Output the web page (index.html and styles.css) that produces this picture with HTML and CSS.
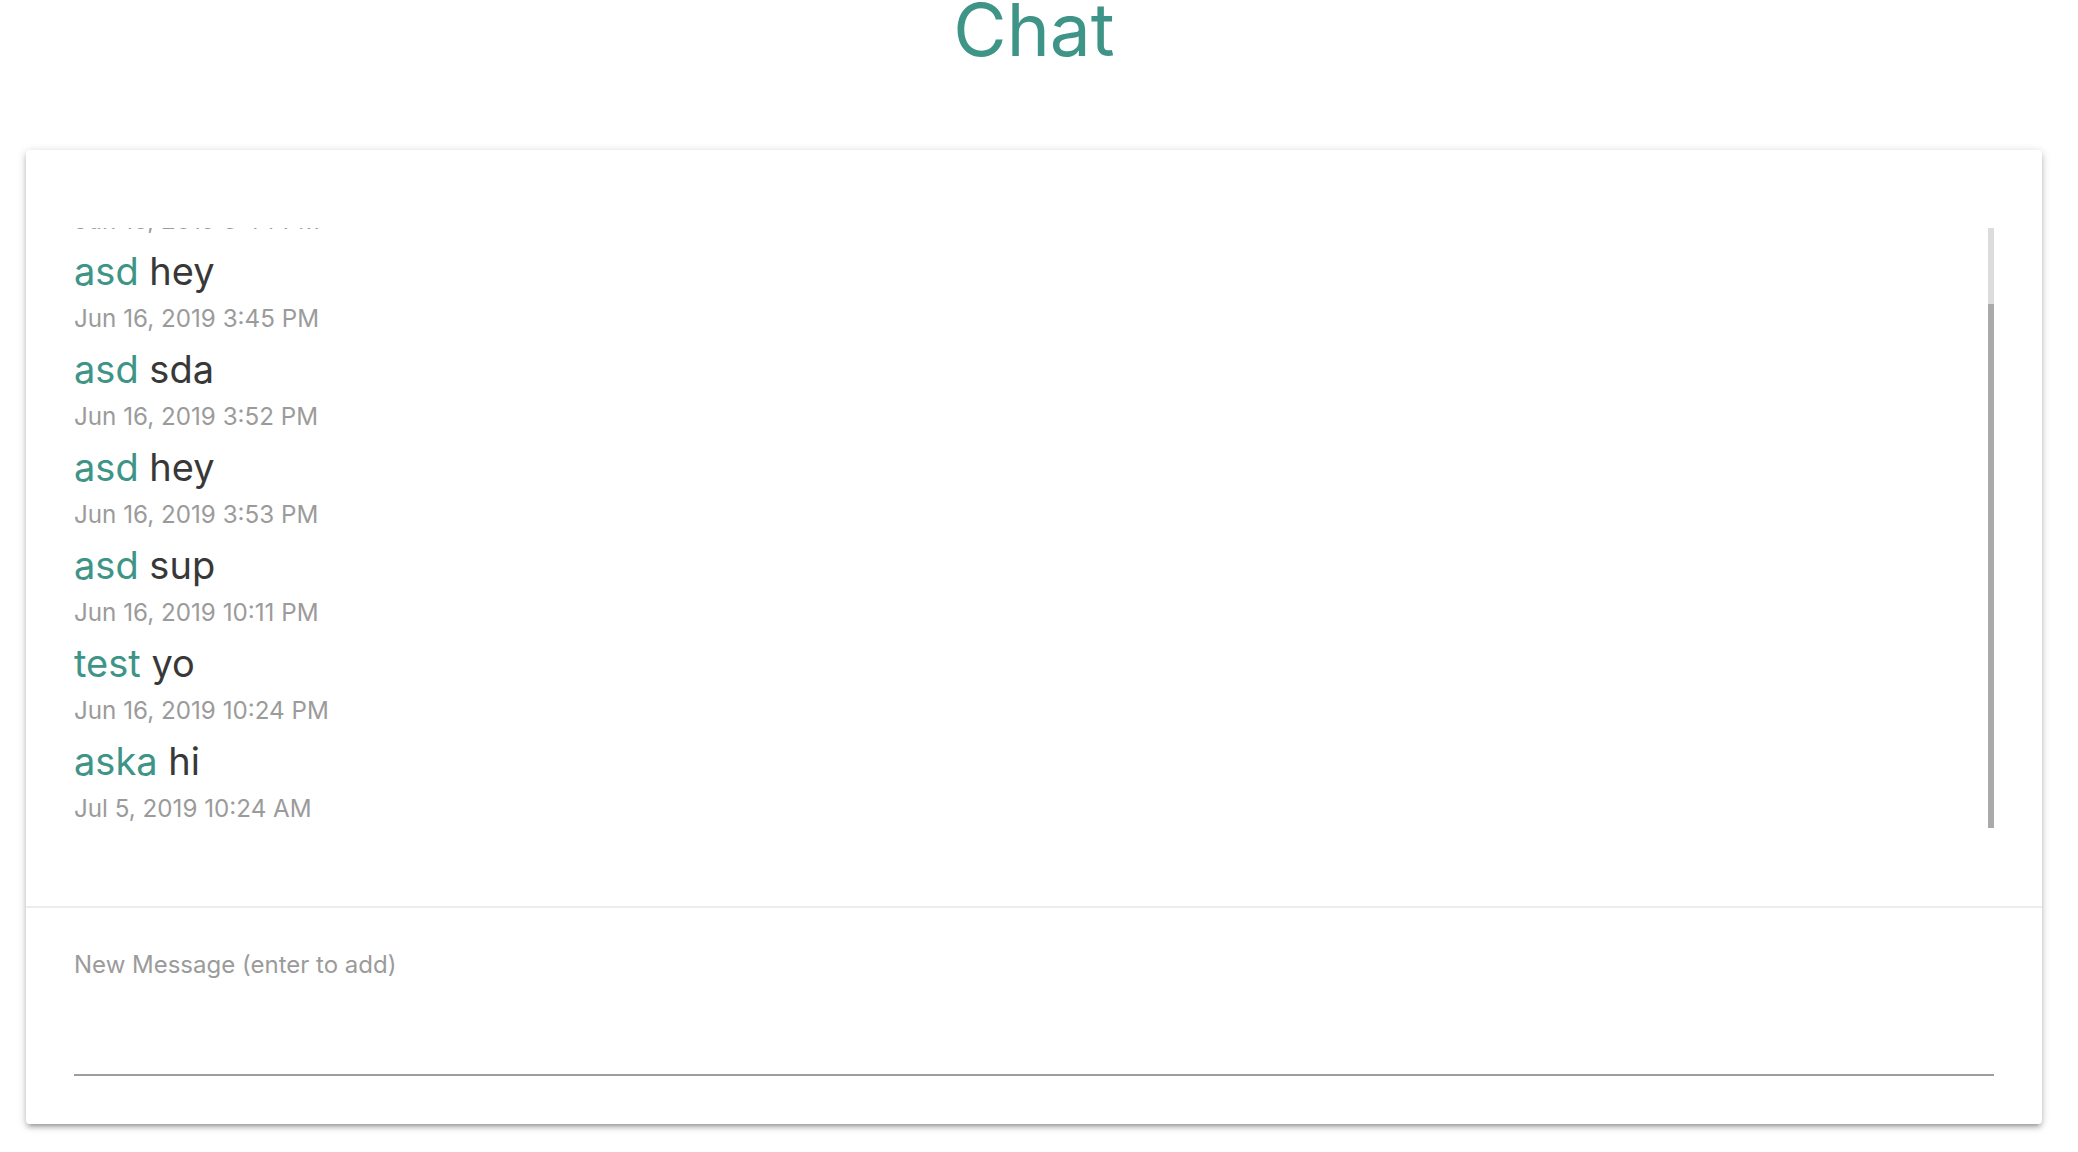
FILE: index.html
```html
<!DOCTYPE html>
<html lang="en">
<head>
<meta charset="utf-8">
<title>Chat</title>
<link rel="stylesheet" href="styles.css">
</head>
<body>
<div class="page">
  <h1 class="title">Chat</h1>
  <div class="card">
    <div class="messages-section">
      <div class="scroller">
        <div class="list">
          <div class="msg"><div class="line"><span class="name">asd</span> <span class="text">hi</span></div><div class="date">Jun 16, 2019 3:44 PM</div></div>
          <div class="msg"><div class="line"><span class="name">asd</span> <span class="text">hey</span></div><div class="date">Jun 16, 2019 3:45 PM</div></div>
          <div class="msg"><div class="line"><span class="name">asd</span> <span class="text">sda</span></div><div class="date">Jun 16, 2019 3:52 PM</div></div>
          <div class="msg"><div class="line"><span class="name">asd</span> <span class="text">hey</span></div><div class="date">Jun 16, 2019 3:53 PM</div></div>
          <div class="msg"><div class="line"><span class="name">asd</span> <span class="text">sup</span></div><div class="date">Jun 16, 2019 10:11 PM</div></div>
          <div class="msg"><div class="line"><span class="name">test</span> <span class="text">yo</span></div><div class="date">Jun 16, 2019 10:24 PM</div></div>
          <div class="msg"><div class="line"><span class="name">aska</span> <span class="text">hi</span></div><div class="date">Jul 5, 2019 10:24 AM</div></div>
        </div>
      </div>
      <div class="scrollbar"><div class="thumb"></div></div>
    </div>
    <div class="input-section">
      <textarea class="new-message" placeholder="New Message (enter to add)"></textarea>
    </div>
  </div>
</div>
</body>
</html>
```
FILE: styles.css
```css
html, body {
  margin: 0;
  padding: 0;
  background: #ffffff;
}
body {
  font-family: Inter, "Noto Sans", "Liberation Sans", sans-serif;
}
.page {
  padding: 0 36px 26px 26px;
}
.title {
  margin: 0;
  text-align: center;
  font-size: 73px;
  line-height: 60px;
  font-weight: 400;
  color: #3e9486;
}
.card {
  margin-top: 90px;
  background: #fff;
  border-radius: 4px;
  box-shadow: 0 4px 4px 0 rgba(0,0,0,0.14), 0 6px 2px -4px rgba(0,0,0,0.12), 0 2px 10px 0 rgba(0,0,0,0.2);
}
.messages-section {
  display: flex;
  padding: 78px 48px;
  border-bottom: 2px solid #ececec;
}
.scroller {
  flex: 1;
  height: 600px;
  overflow: hidden;
  display: flex;
  flex-direction: column-reverse;
}
.scrollbar {
  width: 6px;
  height: 600px;
  background: #dcdcdc;
  display: flex;
  flex-direction: column;
}
.thumb {
  margin-top: 76px;
  flex: 1;
  background: #aaaaaa;
}
.msg {
  height: 98px;
}
.line {
  font-size: 38px;
  line-height: 56px;
  color: #383838;
  padding-top: 3px;
  height: 53px;
}
.name {
  color: #3e9486;
}
.date {
  font-size: 24.2px;
  line-height: 42px;
  padding-top: 2px;
  color: #9b9b9b;
}
.input-section {
  padding: 37px 48px 48px;
}
.new-message {
  display: block;
  box-sizing: border-box;
  width: 100%;
  height: 131px;
  margin: 0;
  padding: 0;
  border: none;
  border-bottom: 2px solid #9e9e9e;
  outline: none;
  resize: none;
  background: transparent;
  font-family: Inter, "Noto Sans", "Liberation Sans", sans-serif;
  font-size: 24px;
  line-height: 40px;
  color: #383838;
}
.new-message::placeholder {
  color: #9b9b9b;
}
```
